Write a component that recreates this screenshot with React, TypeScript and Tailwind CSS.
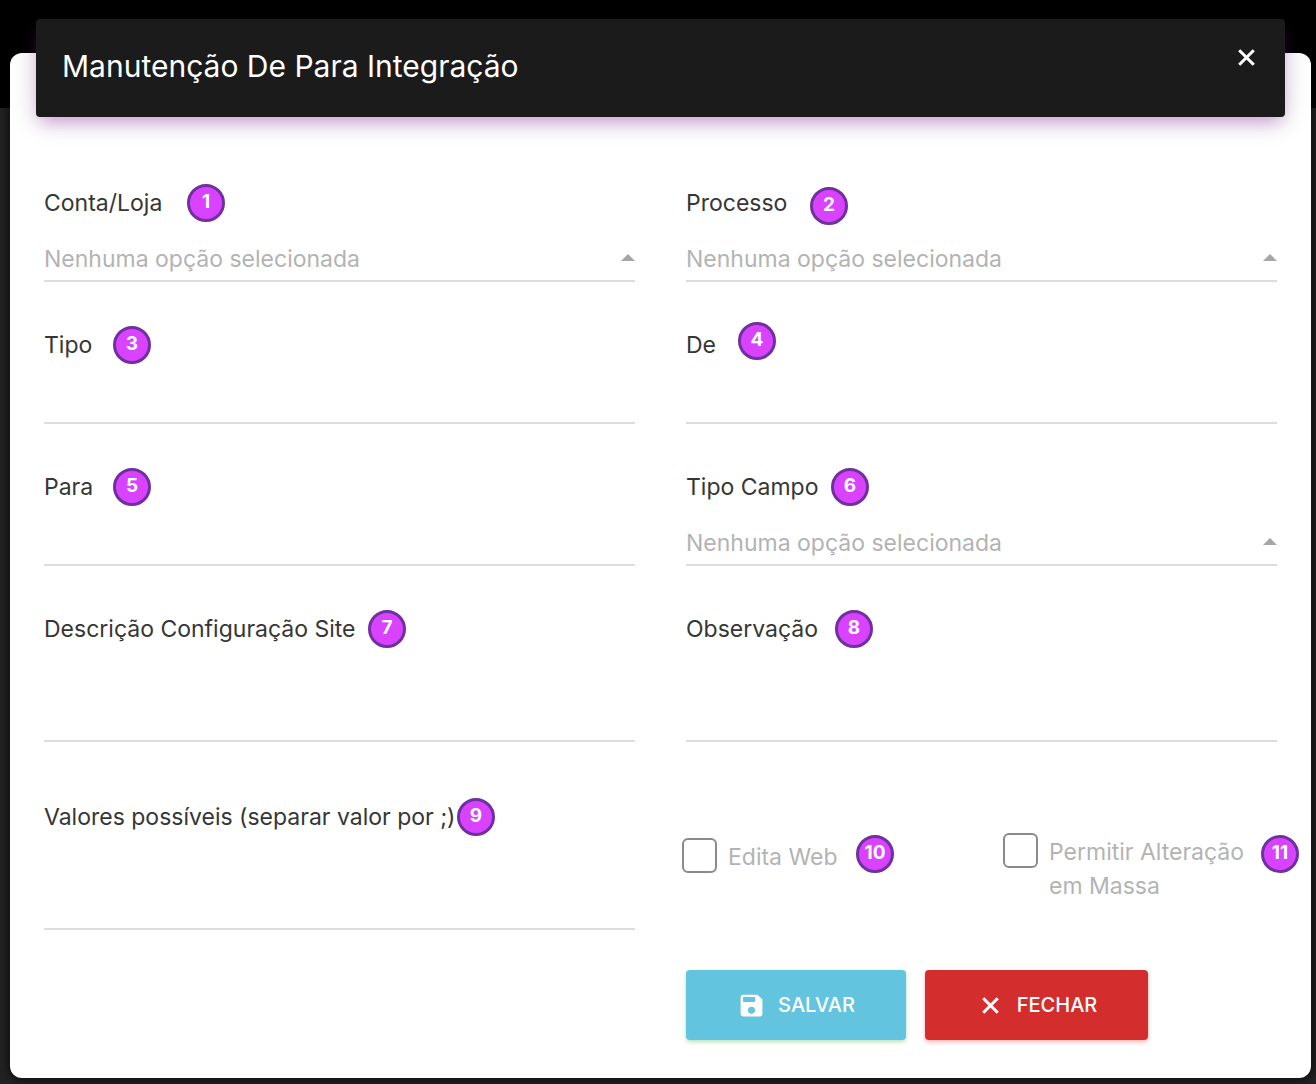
import { ReactNode } from 'react';
import clsx from 'clsx';
import { MdSave } from 'react-icons/md';

type FieldProps = {
  id: string;
  label: string;
  pin: number;
  pinClass: string;
  type?: 'text' | 'select' | 'area';
  className?: string;
};

const fields: FieldProps[] = [
  { id: 'conta', label: 'Conta/Loja', pin: 1, pinClass: 'left-[143px]', type: 'select' },
  { id: 'processo', label: 'Processo', pin: 2, pinClass: 'top-[3px] left-[124px]', type: 'select' },
  { id: 'tipo', label: 'Tipo', pin: 3, pinClass: 'left-[69px]' },
  { id: 'de', label: 'De', pin: 4, pinClass: '-top-1 left-[52px]' },
  { id: 'para', label: 'Para', pin: 5, pinClass: 'left-[69px]' },
  { id: 'tipo-campo', label: 'Tipo Campo', pin: 6, pinClass: 'left-[145px]', type: 'select' },
  { id: 'descricao', label: 'Descrição Configuração Site', pin: 7, pinClass: 'left-[324px]', type: 'area' },
  { id: 'observacao', label: 'Observação', pin: 8, pinClass: 'left-[149px]', type: 'area' },
  { id: 'valores', label: 'Valores possíveis (separar valor por ;)', pin: 9, pinClass: 'left-[413px]', type: 'area', className: 'mt-3' },
];

export default function App() {
  return (
    <div className="relative min-h-screen bg-[#222222] pt-[53px] pr-[5px] pb-[6px] pl-[10px] font-['Inter','Open_Sans',sans-serif]">
      <div className="absolute inset-x-0 top-0 h-[108px] bg-black" />
      <main role="dialog" aria-labelledby="dialog-title" className="relative rounded-xl bg-white shadow-[0_0_8px_2px_rgba(0,0,0,0.6)]">
        <DialogHeader />
        <form className="px-[34px] pt-[67px] pb-[38px]" onSubmit={e => e.preventDefault()}>
          <div className="grid grid-cols-2 gap-x-[51px] gap-y-11">
            {fields.map(field => <Field key={field.id} {...field} />)}
            <div className="mt-3 grid grid-cols-2 gap-x-[51px] pt-[35px]">
              <Check id="edita-web" className="pt-[5px]" pin={<Pin n={10} className="top-0.5 left-[174px]" />}>Edita Web</Check>
              <Check id="alteracao-massa" pin={<Pin n={11} className="top-0.5 left-[258px]" />}>Permitir Alteração em Massa</Check>
            </div>
          </div>
          <div className="mt-10 grid grid-cols-2 gap-x-[51px]">
            <div className="col-start-2 flex gap-[19px]">
              <button type="submit" className="flex h-[70px] w-[220px] items-center justify-center gap-3 rounded bg-[#62c4de] text-[20px] font-medium text-white shadow-[0_2px_4px_rgba(76,175,80,0.4)]">
                <MdSave className="size-[29px]" /> SALVAR
              </button>
              <button type="button" className="flex h-[70px] w-[223px] items-center justify-center gap-3 rounded bg-[#d32d2d] text-[20px] font-medium text-white shadow-[0_2px_4px_rgba(244,67,54,0.4)]">
                <CloseIcon /> FECHAR
              </button>
            </div>
          </div>
        </form>
      </main>
    </div>
  );
}

function DialogHeader() {
  return (
    <header className="relative mx-[26px] flex h-[98px] -translate-y-[34px] items-start justify-between rounded bg-[#1b1b1b] pt-6 pr-6 pl-[26px] -mb-[34px] shadow-[0_8px_16px_-4px_rgba(156,39,176,0.4),0_4px_30px_rgba(0,0,0,0.14)]">
      <h1 id="dialog-title" className="text-[30px] leading-[46px] text-white">Manutenção De Para Integração</h1>
      <button type="button" aria-label="Fechar" className="text-white">
        <CloseIcon />
      </button>
    </header>
  );
}

function CloseIcon() {
  return (
    <svg viewBox="0 0 24 24" className="size-[29px]" fill="none" stroke="currentColor" strokeWidth="2.5" aria-hidden="true">
      <path d="M6 6l12 12M18 6L6 18" />
    </svg>
  );
}

function Pin({ n, className }: { n: number; className?: string }) {
  return (
    <span className={clsx('absolute flex size-[38px] items-center justify-center rounded-full border-3 border-[#7030a0] bg-[#d943ff] pb-0.5 text-[19px] leading-6 font-bold text-white', className)}>
      {n}
    </span>
  );
}

function Field({ id, label, pin, pinClass, type = 'text', className }: FieldProps) {
  const line = 'block w-full resize-none appearance-none border-b-2 border-[#dcdcdc] bg-transparent text-[23px] text-[#b3b3b3] outline-none';

  return (
    <div className={className}>
      <div className="relative flex h-9 items-center pt-0.5">
        <label htmlFor={id} className="text-[23px] text-[#363636]">{label}</label>
        <Pin n={pin} className={pinClass} />
      </div>
      <div className="relative mt-4">
        {type === 'select' && (
          <>
            <select id={id} className={clsx(line, 'h-[46px] pt-0.5')}>
              <option>Nenhuma opção selecionada</option>
            </select>
            <svg viewBox="0 0 14 7" className="pointer-events-none absolute top-[18px] right-0 h-[7px] w-[14px] fill-[#a6a6a6]">
              <path d="M7 0L14 7H0z" />
            </svg>
          </>
        )}
        {type === 'text' && <input id={id} type="text" className={clsx(line, 'h-[46px]')} />}
        {type === 'area' && <textarea id={id} className={clsx(line, 'h-20')} />}
      </div>
    </div>
  );
}

function Check({ id, className, pin, children }: { id: string; className?: string; pin: ReactNode; children: ReactNode }) {
  return (
    <div className={clsx('relative -ml-1 flex items-start gap-[11px]', className)}>
      <input id={id} type="checkbox" className="size-[35px] shrink-0 appearance-none rounded-md border-2 border-[#8a8a8a] bg-white checked:bg-[#62c4de]" />
      <label htmlFor={id} className="pt-0.5 text-[23px] leading-[34px] text-[#b3b3b3]">{children}</label>
      {pin}
    </div>
  );
}
